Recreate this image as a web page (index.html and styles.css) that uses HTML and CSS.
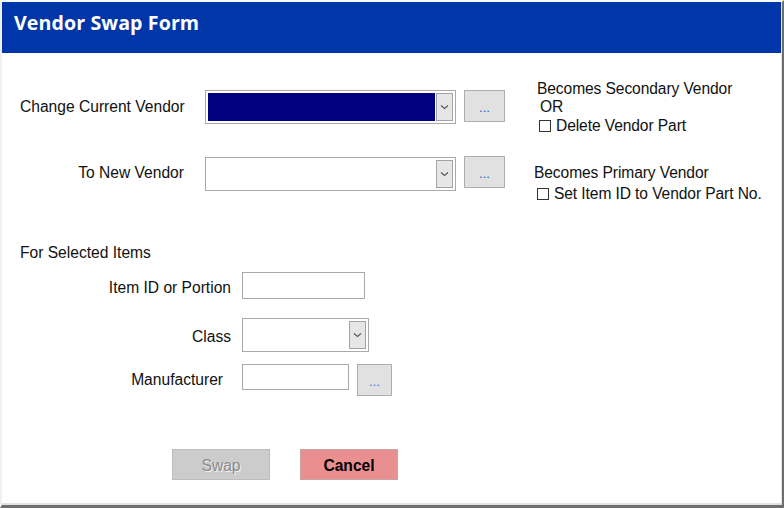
FILE: index.html
```html
<!DOCTYPE html>
<html lang="en">
<head>
  <meta charset="UTF-8">
  <meta name="viewport" content="width=device-width, initial-scale=1.0">
  <title>Vendor Swap Form</title>
  <link rel="stylesheet" href="styles.css">
</head>
<body>
  <div class="window">
    <header class="titlebar">
      <h1>Vendor Swap Form</h1>
    </header>

    <main class="form">
      <div class="vendor-row row-current">
        <label class="lbl">Change Current Vendor</label>
        <div class="combo wide selected">
          <div class="combo-field"></div>
          <div class="combo-drop">
            <svg width="9" height="6" viewBox="0 0 9 6"><path d="M1 1.5 L4.5 4.5 L8 1.5" fill="none" stroke="#555" stroke-width="1.1"/></svg>
          </div>
        </div>
        <button class="dots">...</button>
        <div class="note">
          <div>Becomes Secondary Vendor</div>
          <div class="or">OR</div>
          <div class="check"><span class="box"></span>Delete Vendor Part</div>
        </div>
      </div>

      <div class="vendor-row row-new">
        <label class="lbl">To New Vendor</label>
        <div class="combo wide">
          <div class="combo-field"></div>
          <div class="combo-drop">
            <svg width="9" height="6" viewBox="0 0 9 6"><path d="M1 1.5 L4.5 4.5 L8 1.5" fill="none" stroke="#555" stroke-width="1.1"/></svg>
          </div>
        </div>
        <button class="dots">...</button>
        <div class="note">
          <div>Becomes Primary Vendor</div>
          <div class="check"><span class="box"></span>Set Item ID to Vendor Part No.</div>
        </div>
      </div>

      <div class="section-title">For Selected Items</div>

      <div class="item-row row-item">
        <label class="sub-lbl">Item ID or Portion</label>
        <input type="text" class="txt txt-item">
      </div>

      <div class="item-row row-class">
        <label class="sub-lbl">Class</label>
        <div class="combo narrow">
          <div class="combo-field"></div>
          <div class="combo-drop">
            <svg width="9" height="6" viewBox="0 0 9 6"><path d="M1 1.5 L4.5 4.5 L8 1.5" fill="none" stroke="#555" stroke-width="1.1"/></svg>
          </div>
        </div>
      </div>

      <div class="item-row row-mfr">
        <label class="sub-lbl mfr-lbl">Manufacturer</label>
        <input type="text" class="txt txt-mfr">
        <button class="dots small">...</button>
      </div>

      <div class="actions">
        <button class="btn btn-swap" disabled>Swap</button>
        <button class="btn btn-cancel">Cancel</button>
      </div>
    </main>
  </div>
</body>
</html>
```

FILE: styles.css
```css
* {
  box-sizing: border-box;
}
body {
  margin: 0;
  font-family: "Liberation Sans", Arial, sans-serif;
  font-size: 15.6px;
  color: #111;
  background: #fff;
}
.window {
  width: 784px;
  height: 508px;
  border-top: 2px solid #fafafa;
  border-left: 2px solid #f0f0f0;
  border-right: 2px solid #6e6e6e;
  border-bottom: 3px solid #6e6e6e;
  box-shadow: inset -1px -2px 0 #e2e2e2;
  overflow: hidden;
  display: flex;
  flex-direction: column;
}
.titlebar {
  height: 51px;
  margin-right: 1px;
  background: #0036a8;
  padding: 8px 0 0 12px;
}
.titlebar h1 {
  margin: 0;
  color: #fff;
  font-family: "Open Sans", "Noto Sans", sans-serif;
  font-weight: 700;
  font-size: 19.6px;
  line-height: 26px;
  letter-spacing: 0.1px;
}
.form {
  padding-left: 18px;
  display: flex;
  flex-direction: column;
}

/* vendor rows */
.vendor-row {
  display: flex;
  align-items: flex-start;
}
.row-current {
  margin-top: 26px;
}
.row-new {
  margin-top: 22px;
}
.lbl {
  width: 164px;
  text-align: right;
  margin-right: 21px;
  line-height: 18px;
  white-space: nowrap;
}
.row-current .lbl {
  margin-top: 19px;
}
.row-new .lbl {
  margin-top: 7px;
}
.row-current .combo,
.row-current .dots {
  margin-top: 11px;
}
.row-new .dots {
  margin-top: -1px;
}
.note {
  line-height: 18px;
  white-space: nowrap;
  letter-spacing: -0.1px;
}
.row-current .note {
  margin-left: 32px;
  margin-top: 1px;
}
.row-new .note {
  margin-left: 29px;
  margin-top: 7px;
}
.or {
  padding-left: 3px;
}
.check {
  display: flex;
  align-items: center;
  padding-left: 2px;
  margin-top: 1px;
}
.row-new .check {
  padding-left: 3px;
  margin-top: 3px;
}
.box {
  display: inline-block;
  width: 12px;
  height: 12px;
  border: 1px solid #333;
  background: #fff;
  margin-right: 5px;
}

/* combo boxes */
.combo {
  display: flex;
  border: 1px solid #a9a9a9;
  padding: 2px;
  background: #fff;
}
.combo.wide {
  width: 251px;
  height: 34px;
}
.combo.narrow {
  width: 127px;
  height: 34px;
}
.combo-field {
  flex: 1;
}
.combo.selected .combo-field {
  background: #000080;
}
.combo-drop {
  width: 17px;
  margin-left: 1px;
  border: 1px solid #a4a4a4;
  background: #e6e6e6;
  display: flex;
  align-items: center;
  justify-content: center;
}

/* ellipsis buttons */
.dots {
  width: 41px;
  height: 32px;
  margin-left: 8px;
  border: 1px solid #adadad;
  background: #e1e1e1;
  color: #0066cc;
  font-family: "Liberation Sans", Arial, sans-serif;
  font-size: 13px;
  padding: 2px 0 0;
}
.dots.small {
  width: 35px;
  height: 32px;
  color: #3a78c4;
}

/* selected items */
.section-title {
  margin-top: 41px;
  line-height: 18px;
}
.item-row {
  display: flex;
  align-items: center;
}
.sub-lbl {
  width: 211px;
  text-align: right;
  margin-right: 11px;
  line-height: 18px;
  white-space: nowrap;
}
.mfr-lbl {
  padding-right: 8px;
  align-self: flex-start;
  margin-top: 7px;
}
.row-item {
  margin-top: 10px;
}
.row-item .sub-lbl {
  padding-top: 4px;
}
.row-class {
  margin-top: 19px;
}
.row-class .sub-lbl {
  padding-top: 3px;
}
.row-mfr {
  margin-top: 12px;
  align-items: flex-start;
}
.txt {
  border: 1px solid #a9a9a9;
  background: #fff;
  margin: 0;
  padding: 0 4px;
  font: inherit;
}
.txt-item {
  width: 123px;
  height: 27px;
}
.txt-mfr {
  width: 107px;
  height: 26px;
}

/* action buttons */
.actions {
  display: flex;
  margin-top: 53px;
  padding-left: 152px;
  gap: 30px;
}
.btn {
  width: 98px;
  height: 31px;
  font-family: "Liberation Sans", Arial, sans-serif;
  font-size: 15.6px;
  padding: 2px 0 0;
}
.btn-swap {
  background: #cccccc;
  border: 1px solid #bdbdbd;
  color: #8a8a8a;
  text-shadow: 1px 1px 0 #f2f2f2;
}
.btn-cancel {
  background: #ea8f8f;
  border: 1px solid #c8a4a4;
  color: #000;
  font-weight: 700;
}
```
